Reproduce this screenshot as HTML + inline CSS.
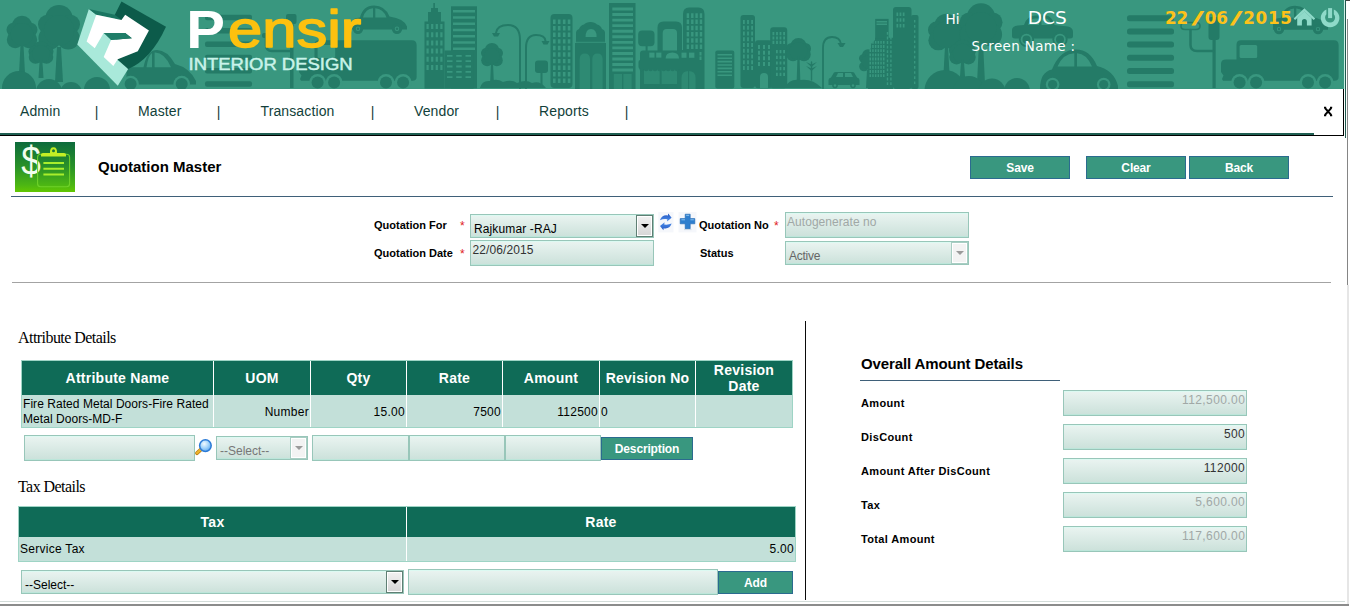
<!DOCTYPE html>
<html lang="en">
<head>
<meta charset="utf-8">
<title>Quotation Master</title>
<style>
html,body{margin:0;padding:0;}
body{width:1350px;height:607px;position:relative;overflow:hidden;background:#fff;font-family:"Liberation Sans",Arial,sans-serif;font-size:12px;color:#000;}
.a{position:absolute;white-space:nowrap;}
#hdr{left:0;top:0;width:1344px;height:89px;background:#39977f;overflow:hidden;}
.vd{font-family:"DejaVu Sans","Liberation Sans",sans-serif;}
.nav{top:103px;font-size:14px;color:#123f3a;line-height:16px;letter-spacing:0.12px;}
.lbl{font-weight:bold;font-size:11px;line-height:13px;color:#000;}
.lbl.r{letter-spacing:0.35px;}
.req{color:#e0201c;font-size:12px;line-height:13px;}
.inp{box-sizing:border-box;border:1px solid #98c6b9;background:linear-gradient(#eaf4f1,#cbe1da);box-shadow:inset 0 1px 0 #dcfaf2,inset 0 -1px 0 #bce6da;font-size:12px;color:#333;overflow:hidden;}
.inp span{position:absolute;white-space:nowrap;}
.inp span.v{letter-spacing:0.4px;right:0.8px;}
.btn{box-sizing:border-box;border:1px solid #2b6b8f;letter-spacing:-0.15px;background:#39977f;color:#fff;font-weight:bold;font-size:12px;text-align:center;}
.th{background:#0f6b57;color:#fff;font-weight:bold;font-size:14px;text-align:center;letter-spacing:0.25px;}
.td{background:#c3e0d9;font-size:12px;color:#000;letter-spacing:0.28px;}
.serif{font-family:"Liberation Serif","Times New Roman",serif;font-size:16px;line-height:18px;color:#000;letter-spacing:-0.55px;}
.dd{box-sizing:border-box;border:1px solid #5f7f74;box-shadow:inset 0 0 0 1px #fff;background:linear-gradient(#f2f2f2,#d6d6d6);}
.dd:after{content:"";position:absolute;left:3.6px;top:8.2px;border-left:4px solid transparent;border-right:4px solid transparent;border-top:4.3px solid #000;}
.dd.dis{border-color:#a9cdc3;background:#f3f3f3;}
.dd.dis:after{border-top-color:#9a9a9a;}
</style>
</head>
<body>

<!-- HEADER -->
<div id="hdr" class="a">
<svg class="a" style="left:0;top:0" width="1344" height="89" viewBox="0 0 1344 89">
<g id="city" fill="#247b67"><!--CITY-->
<circle cx="22" cy="25.9" r="10.23"/>
<circle cx="13.63" cy="29.86" r="7.13"/>
<circle cx="30.37" cy="29.86" r="7.13"/>
<circle cx="15.18" cy="39.76" r="8.37"/>
<circle cx="28.82" cy="39.76" r="8.37"/>
<circle cx="22" cy="34.15" r="11.16"/>
<path d="M20.5 45.0L23.5 45.0L25.0 74L19.0 74z"/>
<circle cx="59" cy="18.8" r="13.86"/>
<circle cx="47.66" cy="24.32" r="9.66"/>
<circle cx="70.34" cy="24.32" r="9.66"/>
<circle cx="49.76" cy="38.12" r="11.34"/>
<circle cx="68.24" cy="38.12" r="11.34"/>
<circle cx="59" cy="30.3" r="15.12"/>
<path d="M57.0 47.0L61.0 47.0L63.0 82L55.0 82z"/>
<circle cx="41" cy="49.4" r="8.25"/>
<circle cx="34.25" cy="51.56" r="5.75"/>
<circle cx="47.75" cy="51.56" r="5.75"/>
<circle cx="35.5" cy="56.96" r="6.75"/>
<circle cx="46.5" cy="56.96" r="6.75"/>
<circle cx="41" cy="53.9" r="9"/>
<path d="M39.8 58.0L42.2 58.0L43.5 78L38.5 78z"/>
<circle cx="19" cy="88" r="17"/>
<circle cx="49" cy="92" r="13"/>
<circle cx="71" cy="93" r="11"/>
<circle cx="97" cy="90" r="13"/>
<path d="M126.5 84.5V71Q126.5 67.2 131 67.2H143.5Q147 50 157 50Q167 50 175 64Q190 68 196 81V84.5z"/>
<path d="M146.5 67.2Q148.5 55 152 53V67.2z M154.6 52.6Q164 52 171 67.2H154.6z" fill="#39977f"/>
<circle cx="130.6" cy="84" r="8.3" fill="#39977f"/>
<circle cx="181.7" cy="84" r="8.3" fill="#39977f"/>
<circle cx="130.6" cy="84" r="6"/>
<circle cx="181.7" cy="84" r="6"/>
<rect x="205" y="14.8" width="47" height="5.5" rx="2"/>
<rect x="205" y="28.1" width="47" height="5.5" rx="2"/>
<rect x="205" y="41.4" width="47" height="5.5" rx="2"/>
<rect x="205" y="54.7" width="47" height="5.5" rx="2"/>
<rect x="205" y="68" width="47" height="5.5" rx="2"/>
<rect x="205" y="81.3" width="47" height="5.5" rx="2"/>
<rect x="290" y="15" width="3.5" height="73"/>
<rect x="286" y="14" width="10.5" height="10" rx="2"/>
<path d="M291 51H272Q266 51 266 45V38" fill="none" stroke="#247b67" stroke-width="2.5" stroke-linecap="round"/>
<rect x="262" y="33" width="9" height="5" rx="2"/>
<path d="M314.5 44.5Q314.5 40.2 319 40.2H412Q416.6 40.2 416.6 45V77Q416.6 80.8 412.6 80.8H301L300 79L301.5 75.5L299 72V64Q299 59.6 304 59.6H314.5z"/>
<rect x="317.6" y="45" width="17.6" height="13" rx="1.5" fill="#39977f"/>
<circle cx="317.6" cy="82.4" r="8.5" fill="#39977f"/>
<circle cx="317.6" cy="82.4" r="6"/>
<circle cx="334.1" cy="82.4" r="8.5" fill="#39977f"/>
<circle cx="334.1" cy="82.4" r="6"/>
<circle cx="386" cy="82.4" r="8.5" fill="#39977f"/>
<circle cx="386" cy="82.4" r="6"/>
<circle cx="403.1" cy="82.4" r="8.5" fill="#39977f"/>
<circle cx="403.1" cy="82.4" r="6"/>
<path d="M352 29.5V23.5Q352 18.5 357 18.0L360 17.5Q363 5.5 374 5.5Q385 5.5 389.5 16.5Q404 18.5 407 26.5V29.5z"/>
<path d="M363 17.5Q365.5 8.5 373 8.3V17.5z M375.3 8.3Q383 8.5 386.5 17.5H375.3z" fill="#39977f"/>
<circle cx="358" cy="28.8" r="5.2"/>
<circle cx="397" cy="28.8" r="5.2"/>
<circle cx="358" cy="28.8" r="2.2" fill="#39977f"/>
<circle cx="397" cy="28.8" r="2.2" fill="#39977f"/>
<circle cx="358" cy="28.8" r="1.3"/>
<circle cx="397" cy="28.8" r="1.3"/>
<rect x="424.5" y="21.5" width="20" height="67"/>
<rect x="428" y="12" width="13" height="10"/>
<rect x="431" y="8" width="7" height="5"/>
<rect x="433.3" y="3" width="1.6" height="6"/>
<path d="M426.5 24.0h2.2v5h-2.2zM431.1 24.0h2.2v5h-2.2zM435.7 24.0h2.2v5h-2.2zM440.3 24.0h2.2v5h-2.2zM426.5 32.2h2.2v5h-2.2zM431.1 32.2h2.2v5h-2.2zM435.7 32.2h2.2v5h-2.2zM440.3 32.2h2.2v5h-2.2zM426.5 40.4h2.2v5h-2.2zM431.1 40.4h2.2v5h-2.2zM435.7 40.4h2.2v5h-2.2zM440.3 40.4h2.2v5h-2.2zM426.5 48.6h2.2v5h-2.2zM431.1 48.6h2.2v5h-2.2zM435.7 48.6h2.2v5h-2.2zM440.3 48.6h2.2v5h-2.2zM426.5 56.8h2.2v5h-2.2zM431.1 56.8h2.2v5h-2.2zM435.7 56.8h2.2v5h-2.2zM440.3 56.8h2.2v5h-2.2zM426.5 65.0h2.2v5h-2.2zM431.1 65.0h2.2v5h-2.2zM435.7 65.0h2.2v5h-2.2zM440.3 65.0h2.2v5h-2.2z" fill="#39977f"/>
<rect x="451" y="6.3" width="26" height="82"/>
<path d="M453.0 10.0h22v2.6h-22zM453.0 16.2h22v2.6h-22zM453.0 22.5h22v2.6h-22zM453.0 28.7h22v2.6h-22zM453.0 34.9h22v2.6h-22zM453.0 41.2h22v2.6h-22zM453.0 47.4h22v2.6h-22z" fill="#39977f"/>
<rect x="444.5" y="50.5" width="29" height="38"/>
<path d="M447.0 55.0h5.5v1.8h-5.5zM456.2 55.0h5.5v1.8h-5.5zM465.5 55.0h5.5v1.8h-5.5zM447.0 60.3h5.5v1.8h-5.5zM456.2 60.3h5.5v1.8h-5.5zM465.5 60.3h5.5v1.8h-5.5zM447.0 65.6h5.5v1.8h-5.5zM456.2 65.6h5.5v1.8h-5.5zM465.5 65.6h5.5v1.8h-5.5zM447.0 70.9h5.5v1.8h-5.5zM456.2 70.9h5.5v1.8h-5.5zM465.5 70.9h5.5v1.8h-5.5zM447.0 76.2h5.5v1.8h-5.5zM456.2 76.2h5.5v1.8h-5.5zM465.5 76.2h5.5v1.8h-5.5z" fill="#39977f"/>
<circle cx="492" cy="50.2" r="7.26"/>
<circle cx="486.06" cy="53.08" r="5.06"/>
<circle cx="497.94" cy="53.08" r="5.06"/>
<circle cx="487.16" cy="60.28" r="5.94"/>
<circle cx="496.84" cy="60.28" r="5.94"/>
<circle cx="492" cy="56.2" r="7.92"/>
<path d="M491.0 63.0L493.0 63.0L494.0 86L490.0 86z"/>
<path d="M480 88Q482 80 490 81Q497 78 503 82Q512 79 517 83Q526 79 532 83Q540 80 546 88z"/>
<path d="M520 88V40Q520 25 508 25Q497 25 496 33" fill="none" stroke="#247b67" stroke-width="2" stroke-linecap="round"/>
<path d="M492 33h8l-2 3.5h-4z"/>
<path d="M526 88V48Q526 35 536 35Q545 35 545.5 41" fill="none" stroke="#247b67" stroke-width="2" stroke-linecap="round"/>
<path d="M541.5 41h8l-2 3.5h-4z"/>
<rect x="535" y="60.5" width="13" height="12.5" rx="3"/>
<rect x="540.5" y="73" width="2" height="15"/>
<rect x="550.5" y="14" width="22" height="74" rx="4"/>
<path d="M553.0 19.5h2.6v4.4h-2.6zM557.9 19.5h2.6v4.4h-2.6zM562.9 19.5h2.6v4.4h-2.6zM567.8 19.5h2.6v4.4h-2.6zM553.0 26.1h2.6v4.4h-2.6zM557.9 26.1h2.6v4.4h-2.6zM562.9 26.1h2.6v4.4h-2.6zM567.8 26.1h2.6v4.4h-2.6zM553.0 32.6h2.6v4.4h-2.6zM557.9 32.6h2.6v4.4h-2.6zM562.9 32.6h2.6v4.4h-2.6zM567.8 32.6h2.6v4.4h-2.6zM553.0 39.2h2.6v4.4h-2.6zM557.9 39.2h2.6v4.4h-2.6zM562.9 39.2h2.6v4.4h-2.6zM567.8 39.2h2.6v4.4h-2.6zM553.0 45.8h2.6v4.4h-2.6zM557.9 45.8h2.6v4.4h-2.6zM562.9 45.8h2.6v4.4h-2.6zM567.8 45.8h2.6v4.4h-2.6zM553.0 52.3h2.6v4.4h-2.6zM557.9 52.3h2.6v4.4h-2.6zM562.9 52.3h2.6v4.4h-2.6zM567.8 52.3h2.6v4.4h-2.6zM553.0 58.9h2.6v4.4h-2.6zM557.9 58.9h2.6v4.4h-2.6zM562.9 58.9h2.6v4.4h-2.6zM567.8 58.9h2.6v4.4h-2.6zM553.0 65.5h2.6v4.4h-2.6zM557.9 65.5h2.6v4.4h-2.6zM562.9 65.5h2.6v4.4h-2.6zM567.8 65.5h2.6v4.4h-2.6zM553.0 72.0h2.6v4.4h-2.6zM557.9 72.0h2.6v4.4h-2.6zM562.9 72.0h2.6v4.4h-2.6zM567.8 72.0h2.6v4.4h-2.6zM553.0 78.6h2.6v4.4h-2.6zM557.9 78.6h2.6v4.4h-2.6zM562.9 78.6h2.6v4.4h-2.6zM567.8 78.6h2.6v4.4h-2.6z" fill="#39977f"/>
<path d="M575 89V43H576V33Q576 30 579 29Q580.5 25 584 24.5Q586 22 590.5 22Q595 22 597 24.5Q600.5 25 602 29Q605 30 605 33V43H606V89z"/>
<path d="M585.6 37Q585.6 29 591 29Q596.6 29 596.6 37z" fill="#39977f"/>
<rect x="575" y="41.8" width="31" height="0.9" fill="#39977f"/>
<path d="M579.7 89V59Q579.7 53.4 584.8 53.4Q590 53.4 590 59V89z M592.3 89V59Q592.3 53.4 597.4 53.4Q602.6 53.4 602.6 59V89z" fill="#2e8a73"/>
<rect x="609" y="3" width="26.5" height="86"/>
<path d="M612.3 7.6h20.7v2.9h-20.7zM612.3 13.1h20.7v2.9h-20.7zM612.3 18.7h20.7v2.9h-20.7zM612.3 24.2h20.7v2.9h-20.7zM612.3 29.8h20.7v2.9h-20.7zM612.3 35.3h20.7v2.9h-20.7zM612.3 40.9h20.7v2.9h-20.7zM612.3 46.4h20.7v2.9h-20.7zM612.3 52.0h20.7v2.9h-20.7zM612.3 57.5h20.7v2.9h-20.7zM612.3 63.1h20.7v2.9h-20.7zM612.3 68.6h20.7v2.9h-20.7z" fill="#39977f"/>
<rect x="613.8" y="74" width="8.2" height="15" fill="#2e8a73"/>
<rect x="623.4" y="74" width="8.2" height="15" fill="#2e8a73"/>
<rect x="638.2" y="30.4" width="16.3" height="15.8" rx="4"/>
<rect x="645.6" y="46" width="2" height="16"/>
<path d="M657.5 52V27.5Q657.5 21.5 663.5 21.5H676Q682 21.5 682 27.5V52H677V33Q677 29 673 29H666.7Q662.7 29 662.7 33V52z"/>
<path d="M640 89V53.5Q640 50.4 643 50.4H683V89z"/>
<rect x="649.3" y="52.6" width="5.2" height="5" fill="#39977f"/>
<rect x="656.2" y="52.6" width="5.2" height="5" fill="#39977f"/>
<path d="M665.6 58.4Q665.6 52.4 672.3 52.4Q679 52.4 679 58.4z" fill="#39977f"/>
<rect x="644" y="69" width="15.7" height="15" fill="#2e8a73"/>
<rect x="661.6" y="69" width="15.4" height="15" fill="#2e8a73"/>
<circle cx="641.8" cy="69" r="2.3"/>
<circle cx="646.2" cy="69" r="2.3"/>
<circle cx="650.6" cy="69" r="2.3"/>
<circle cx="655" cy="69" r="2.3"/>
<circle cx="659.4" cy="69" r="2.3"/>
<circle cx="663.8" cy="69" r="2.3"/>
<circle cx="668.2" cy="69" r="2.3"/>
<circle cx="672.6" cy="69" r="2.3"/>
<circle cx="677" cy="69" r="2.3"/>
<circle cx="681.4" cy="69" r="2.3"/>
<rect x="638.5" y="60" width="44.5" height="9" rx="2"/>
<circle cx="652" cy="90" r="5.5"/>
<circle cx="662" cy="90.5" r="5"/>
<circle cx="672" cy="90" r="5.5"/>
<path d="M683 89V14Q683 7.4 689 7.4H698.5Q704.5 7.4 704.5 14V89z"/>
<rect x="680" y="50" width="6" height="39"/>
<path d="M686.7 13.3h2.4v4.6h-2.4zM691.1 13.3h2.4v4.6h-2.4zM695.4 13.3h2.4v4.6h-2.4zM699.8 13.3h2.4v4.6h-2.4zM686.7 19.5h2.4v4.6h-2.4zM691.1 19.5h2.4v4.6h-2.4zM695.4 19.5h2.4v4.6h-2.4zM699.8 19.5h2.4v4.6h-2.4zM686.7 25.7h2.4v4.6h-2.4zM691.1 25.7h2.4v4.6h-2.4zM695.4 25.7h2.4v4.6h-2.4zM699.8 25.7h2.4v4.6h-2.4zM686.7 32.0h2.4v4.6h-2.4zM691.1 32.0h2.4v4.6h-2.4zM695.4 32.0h2.4v4.6h-2.4zM699.8 32.0h2.4v4.6h-2.4zM686.7 38.2h2.4v4.6h-2.4zM691.1 38.2h2.4v4.6h-2.4zM695.4 38.2h2.4v4.6h-2.4zM699.8 38.2h2.4v4.6h-2.4zM686.7 44.4h2.4v4.6h-2.4zM691.1 44.4h2.4v4.6h-2.4zM695.4 44.4h2.4v4.6h-2.4zM699.8 44.4h2.4v4.6h-2.4z" fill="#39977f"/>
<rect x="681.5" y="52.6" width="5" height="5.2" fill="#39977f"/>
<rect x="689" y="52.6" width="5.4" height="5.2" fill="#39977f"/>
<path d="M699.5 52.0h2v3.4h-2zM699.5 56.6h2v3.4h-2z" fill="#39977f"/>
<path d="M681.5 89V78Q681.5 71 688.5 71Q695.6 71 695.6 78V89z" fill="#2e8a73"/>
<rect x="688" y="71" width="1.1" height="18"/>
<rect x="715.3" y="50.4" width="19" height="38" rx="2"/>
<path d="M717.5 54.0h14.5v1.6h-14.5zM717.5 57.4h14.5v1.6h-14.5zM717.5 60.8h14.5v1.6h-14.5zM717.5 64.2h14.5v1.6h-14.5zM717.5 67.6h14.5v1.6h-14.5zM717.5 71.0h14.5v1.6h-14.5zM717.5 74.4h14.5v1.6h-14.5z" fill="#39977f"/>
<rect x="740.5" y="15" width="14.5" height="73" rx="3"/>
<path d="M743.0 20.0h1.8v4h-1.8zM747.1 20.0h1.8v4h-1.8zM751.2 20.0h1.8v4h-1.8zM743.0 25.8h1.8v4h-1.8zM747.1 25.8h1.8v4h-1.8zM751.2 25.8h1.8v4h-1.8zM743.0 31.5h1.8v4h-1.8zM747.1 31.5h1.8v4h-1.8zM751.2 31.5h1.8v4h-1.8zM743.0 37.2h1.8v4h-1.8zM747.1 37.2h1.8v4h-1.8zM751.2 37.2h1.8v4h-1.8zM743.0 43.0h1.8v4h-1.8zM747.1 43.0h1.8v4h-1.8zM751.2 43.0h1.8v4h-1.8zM743.0 48.8h1.8v4h-1.8zM747.1 48.8h1.8v4h-1.8zM751.2 48.8h1.8v4h-1.8zM743.0 54.5h1.8v4h-1.8zM747.1 54.5h1.8v4h-1.8zM751.2 54.5h1.8v4h-1.8zM743.0 60.2h1.8v4h-1.8zM747.1 60.2h1.8v4h-1.8zM751.2 60.2h1.8v4h-1.8zM743.0 66.0h1.8v4h-1.8zM747.1 66.0h1.8v4h-1.8zM751.2 66.0h1.8v4h-1.8z" fill="#39977f"/>
<rect x="755" y="40.3" width="17" height="48" rx="3"/>
<path d="M758.0 45.0h2v4h-2zM763.0 45.0h2v4h-2zM768.0 45.0h2v4h-2zM758.0 50.7h2v4h-2zM763.0 50.7h2v4h-2zM768.0 50.7h2v4h-2zM758.0 56.3h2v4h-2zM763.0 56.3h2v4h-2zM768.0 56.3h2v4h-2zM758.0 62.0h2v4h-2zM763.0 62.0h2v4h-2zM768.0 62.0h2v4h-2z" fill="#39977f"/>
<path d="M760 88V77Q760 73 764 73Q768 73 768 77V88z" fill="#39977f"/>
<rect x="770.2" y="27.2" width="17" height="61" rx="3"/>
<path d="M772.5 32.0h1.8v3.2h-1.8zM776.1 32.0h1.8v3.2h-1.8zM779.6 32.0h1.8v3.2h-1.8zM783.2 32.0h1.8v3.2h-1.8zM772.5 36.4h1.8v3.2h-1.8zM776.1 36.4h1.8v3.2h-1.8zM779.6 36.4h1.8v3.2h-1.8zM783.2 36.4h1.8v3.2h-1.8zM772.5 40.8h1.8v3.2h-1.8zM776.1 40.8h1.8v3.2h-1.8zM779.6 40.8h1.8v3.2h-1.8zM783.2 40.8h1.8v3.2h-1.8z" fill="#39977f"/>
<path d="M776.0 50.0h1.8v3.2h-1.8zM779.6 50.0h1.8v3.2h-1.8zM783.2 50.0h1.8v3.2h-1.8zM776.0 55.7h1.8v3.2h-1.8zM779.6 55.7h1.8v3.2h-1.8zM783.2 55.7h1.8v3.2h-1.8zM776.0 61.4h1.8v3.2h-1.8zM779.6 61.4h1.8v3.2h-1.8zM783.2 61.4h1.8v3.2h-1.8zM776.0 67.1h1.8v3.2h-1.8zM779.6 67.1h1.8v3.2h-1.8zM783.2 67.1h1.8v3.2h-1.8zM776.0 72.8h1.8v3.2h-1.8zM779.6 72.8h1.8v3.2h-1.8zM783.2 72.8h1.8v3.2h-1.8z" fill="#39977f"/>
<circle cx="798.5" cy="46.35" r="8.25"/>
<circle cx="791.75" cy="48.69" r="5.75"/>
<circle cx="805.25" cy="48.69" r="5.75"/>
<circle cx="793" cy="54.54" r="6.75"/>
<circle cx="804" cy="54.54" r="6.75"/>
<circle cx="798.5" cy="51.225" r="9"/>
<path d="M797.5 56.0L799.5 56.0L800.5 86L796.5 86z"/>
<path d="M784 88Q790 78 800 80Q812 78 822 88z"/>
<path d="M811.5 80V62" fill="none" stroke="#247b67" stroke-width="1.4" stroke-linecap="round"/>
<path d="M806 62l5.5 5 5.5-5-5.5 2.5z M806 66l5.5 5 5.5-5-5.5 2.5z"/>
<path d="M823 88V48Q823 37 832 37Q840 37 841 44" fill="none" stroke="#247b67" stroke-width="1.8" stroke-linecap="round"/>
<path d="M837.5 43h8l-2.5 4h-3z"/>
<path d="M828.5 85V80Q828.5 78 831 77.5L834 72.5Q834.5 72 836 72H852Q853.5 72 854 72.5L857 77.5Q859.5 78 859.5 80V85z"/>
<path d="M836 77l2-4h5v4z M845 77v-4h6l2 4z" fill="#39977f"/>
<circle cx="835" cy="85.5" r="2.8"/>
<circle cx="853" cy="85.5" r="2.8"/>
<circle cx="835" cy="85.5" r="1.2" fill="#39977f"/>
<circle cx="853" cy="85.5" r="1.2" fill="#39977f"/>
<circle cx="868" cy="55.1" r="5.94"/>
<circle cx="863.14" cy="58.34" r="4.14"/>
<circle cx="872.86" cy="58.34" r="4.14"/>
<circle cx="864.04" cy="66.44" r="4.86"/>
<circle cx="871.96" cy="66.44" r="4.86"/>
<circle cx="868" cy="61.85" r="6.48"/>
<path d="M867.0 70.0L869.0 70.0L870.0 88L866.0 88z"/>
<path d="M868 89V52L871 48V44L875 40V37.8H893V89z"/>
<rect x="875.2" y="18.9" width="13.4" height="20"/>
<rect x="893" y="7" width="18.5" height="82" rx="3"/>
<rect x="911" y="15" width="7.5" height="74" rx="2"/>
<path d="M876.5 21.0h10.5v0.9h-10.5zM876.5 22.6h10.5v0.9h-10.5zM876.5 24.1h10.5v0.9h-10.5z" fill="#39977f"/>
<path d="M869.5 41.0h1.5v2.8h-1.5zM872.2 41.0h1.5v2.8h-1.5zM874.9 41.0h1.5v2.8h-1.5zM877.6 41.0h1.5v2.8h-1.5zM880.3 41.0h1.5v2.8h-1.5zM883.0 41.0h1.5v2.8h-1.5zM869.5 45.1h1.5v2.8h-1.5zM872.2 45.1h1.5v2.8h-1.5zM874.9 45.1h1.5v2.8h-1.5zM877.6 45.1h1.5v2.8h-1.5zM880.3 45.1h1.5v2.8h-1.5zM883.0 45.1h1.5v2.8h-1.5zM869.5 49.3h1.5v2.8h-1.5zM872.2 49.3h1.5v2.8h-1.5zM874.9 49.3h1.5v2.8h-1.5zM877.6 49.3h1.5v2.8h-1.5zM880.3 49.3h1.5v2.8h-1.5zM883.0 49.3h1.5v2.8h-1.5zM869.5 53.5h1.5v2.8h-1.5zM872.2 53.5h1.5v2.8h-1.5zM874.9 53.5h1.5v2.8h-1.5zM877.6 53.5h1.5v2.8h-1.5zM880.3 53.5h1.5v2.8h-1.5zM883.0 53.5h1.5v2.8h-1.5zM869.5 57.6h1.5v2.8h-1.5zM872.2 57.6h1.5v2.8h-1.5zM874.9 57.6h1.5v2.8h-1.5zM877.6 57.6h1.5v2.8h-1.5zM880.3 57.6h1.5v2.8h-1.5zM883.0 57.6h1.5v2.8h-1.5zM869.5 61.8h1.5v2.8h-1.5zM872.2 61.8h1.5v2.8h-1.5zM874.9 61.8h1.5v2.8h-1.5zM877.6 61.8h1.5v2.8h-1.5zM880.3 61.8h1.5v2.8h-1.5zM883.0 61.8h1.5v2.8h-1.5zM869.5 65.9h1.5v2.8h-1.5zM872.2 65.9h1.5v2.8h-1.5zM874.9 65.9h1.5v2.8h-1.5zM877.6 65.9h1.5v2.8h-1.5zM880.3 65.9h1.5v2.8h-1.5zM883.0 65.9h1.5v2.8h-1.5zM869.5 70.1h1.5v2.8h-1.5zM872.2 70.1h1.5v2.8h-1.5zM874.9 70.1h1.5v2.8h-1.5zM877.6 70.1h1.5v2.8h-1.5zM880.3 70.1h1.5v2.8h-1.5zM883.0 70.1h1.5v2.8h-1.5zM869.5 74.2h1.5v2.8h-1.5zM872.2 74.2h1.5v2.8h-1.5zM874.9 74.2h1.5v2.8h-1.5zM877.6 74.2h1.5v2.8h-1.5zM880.3 74.2h1.5v2.8h-1.5zM883.0 74.2h1.5v2.8h-1.5z" fill="#39977f"/>
<path d="M886.8 32.0h1.4v2.8h-1.4zM890.2 32.0h1.4v2.8h-1.4zM886.8 36.6h1.4v2.8h-1.4zM890.2 36.6h1.4v2.8h-1.4zM886.8 41.1h1.4v2.8h-1.4zM890.2 41.1h1.4v2.8h-1.4zM886.8 45.7h1.4v2.8h-1.4zM890.2 45.7h1.4v2.8h-1.4zM886.8 50.3h1.4v2.8h-1.4zM890.2 50.3h1.4v2.8h-1.4zM886.8 54.8h1.4v2.8h-1.4zM890.2 54.8h1.4v2.8h-1.4zM886.8 59.4h1.4v2.8h-1.4zM890.2 59.4h1.4v2.8h-1.4zM886.8 63.9h1.4v2.8h-1.4zM890.2 63.9h1.4v2.8h-1.4zM886.8 68.5h1.4v2.8h-1.4zM890.2 68.5h1.4v2.8h-1.4zM886.8 73.1h1.4v2.8h-1.4zM890.2 73.1h1.4v2.8h-1.4zM886.8 77.6h1.4v2.8h-1.4zM890.2 77.6h1.4v2.8h-1.4zM886.8 82.2h1.4v2.8h-1.4zM890.2 82.2h1.4v2.8h-1.4z" fill="#39977f"/>
<path d="M896.5 12.5h1.7v3.4h-1.7zM899.6 12.5h1.7v3.4h-1.7zM902.8 12.5h1.7v3.4h-1.7zM896.5 18.3h1.7v3.4h-1.7zM899.6 18.3h1.7v3.4h-1.7zM902.8 18.3h1.7v3.4h-1.7zM896.5 24.1h1.7v3.4h-1.7zM899.6 24.1h1.7v3.4h-1.7zM902.8 24.1h1.7v3.4h-1.7z" fill="#39977f"/>
<path d="M914.0 20.0h1.4v2.6h-1.4zM914.0 25.1h1.4v2.6h-1.4zM914.0 30.2h1.4v2.6h-1.4zM914.0 35.4h1.4v2.6h-1.4zM914.0 40.5h1.4v2.6h-1.4zM914.0 45.6h1.4v2.6h-1.4zM914.0 50.7h1.4v2.6h-1.4zM914.0 55.8h1.4v2.6h-1.4zM914.0 60.9h1.4v2.6h-1.4zM914.0 66.1h1.4v2.6h-1.4zM914.0 71.2h1.4v2.6h-1.4zM914.0 76.3h1.4v2.6h-1.4zM914.0 81.4h1.4v2.6h-1.4z" fill="#39977f"/>
<circle cx="946.5" cy="25.92" r="12.21"/>
<circle cx="936.51" cy="30.048" r="8.51"/>
<circle cx="956.49" cy="30.048" r="8.51"/>
<circle cx="938.36" cy="40.368" r="9.99"/>
<circle cx="954.64" cy="40.368" r="9.99"/>
<circle cx="946.5" cy="34.52" r="13.32"/>
<path d="M945.0 46.0L948.0 46.0L949.5 74L943.5 74z"/>
<circle cx="981" cy="17.44" r="14.19"/>
<circle cx="969.39" cy="22.336" r="9.89"/>
<circle cx="992.61" cy="22.336" r="9.89"/>
<circle cx="971.54" cy="34.576" r="11.61"/>
<circle cx="990.46" cy="34.576" r="11.61"/>
<circle cx="981" cy="27.64" r="15.48"/>
<path d="M979.0 42.0L983.0 42.0L985.0 84L977.0 84z"/>
<circle cx="962.5" cy="48.3" r="8.91"/>
<circle cx="955.21" cy="50.82" r="6.21"/>
<circle cx="969.79" cy="50.82" r="6.21"/>
<circle cx="956.56" cy="57.12" r="7.29"/>
<circle cx="968.44" cy="57.12" r="7.29"/>
<circle cx="962.5" cy="53.55" r="9.72"/>
<path d="M961.2 59.0L963.8 59.0L965.1 78L959.9 78z"/>
<circle cx="945" cy="90.5" r="20.5"/>
<circle cx="969" cy="92" r="16"/>
<circle cx="992" cy="92" r="13.5"/>
<circle cx="1017" cy="91" r="13"/>
<path d="M1012 36V30Q1012 26 1018 25.5L1024 25Q1027 15.5 1036 15.5H1046Q1052 16 1054.5 25L1068 26.5Q1073 27.5 1073 32V36Q1073 38.5 1070 38.5H1015Q1012 38.5 1012 36z"/>
<path d="M1028 25Q1029.5 19 1035 18.5H1039V25z M1041.5 18.5H1045.5Q1050 19 1051.5 25H1041.5z" fill="#39977f"/>
<circle cx="1026.5" cy="39.5" r="7.6"/>
<circle cx="1060" cy="39.5" r="7.6"/>
<circle cx="1026.5" cy="39.5" r="5.8" fill="#39977f"/>
<circle cx="1060" cy="39.5" r="5.8" fill="#39977f"/>
<circle cx="1026.5" cy="39.5" r="4"/>
<circle cx="1060" cy="39.5" r="4"/>
<path d="M1040 89Q1040 72 1052 69.5Q1060 49.6 1076 49.6Q1090 49.6 1097 66Q1114 70 1118 86V89z"/>
<path d="M1057.5 66.5Q1063 53.5 1074.3 53.2V66.5z M1077 53.2Q1086.5 53.5 1092 66.5H1077z" fill="#39977f"/>
<circle cx="1052.6" cy="84.5" r="6.8" fill="#39977f"/>
<circle cx="1103.7" cy="84.5" r="6.8" fill="#39977f"/>
<circle cx="1052.6" cy="84.5" r="4.6"/>
<circle cx="1103.7" cy="84.5" r="4.6"/>
<rect x="1127" y="15.2" width="47" height="6" rx="2.5"/>
<rect x="1127" y="28.4" width="47" height="6" rx="2.5"/>
<rect x="1127" y="41.6" width="47" height="6" rx="2.5"/>
<rect x="1127" y="54.8" width="47" height="6" rx="2.5"/>
<rect x="1127" y="68" width="47" height="6" rx="2.5"/>
<rect x="1127" y="81.2" width="47" height="6" rx="2.5"/>
<rect x="1212.5" y="20" width="3.2" height="68"/>
<rect x="1208.5" y="17" width="11" height="23" rx="3"/>
<path d="M1213 51H1197Q1190.5 51 1190.5 45V30" fill="none" stroke="#247b67" stroke-width="2.5" stroke-linecap="round"/>
<path d="M1181 26Q1181 22.5 1185 22.5H1196Q1200 22.5 1200 26Q1200 29.5 1196 29.5H1185Q1181 29.5 1181 26z" fill="none" stroke="#247b67" stroke-width="1.6" stroke-linecap="round"/>
<path d="M1273 29.8V23.8Q1273 18.8 1278 18.3L1281 17.8Q1284 5.8 1295 5.8Q1306 5.8 1310.5 16.8Q1325 18.8 1328 26.8V29.8z"/>
<path d="M1284 17.8Q1286.5 8.8 1294 8.6V17.8z M1296.3 8.6Q1304 8.8 1307.5 17.8H1296.3z" fill="#39977f"/>
<circle cx="1279" cy="29.1" r="5.2"/>
<circle cx="1318" cy="29.1" r="5.2"/>
<circle cx="1279" cy="29.1" r="2.2" fill="#39977f"/>
<circle cx="1318" cy="29.1" r="2.2" fill="#39977f"/>
<circle cx="1279" cy="29.1" r="1.3"/>
<circle cx="1318" cy="29.1" r="1.3"/>
<path d="M1236.5 44.5Q1236.5 40.2 1241 40.2H1334Q1338.6 40.2 1338.6 45V77Q1338.6 80.8 1334.6 80.8H1223L1222 79L1223.5 75.5L1221 72V64Q1221 59.6 1226 59.6H1236.5z"/>
<rect x="1239.6" y="45" width="17.6" height="13" rx="1.5" fill="#39977f"/>
<circle cx="1239.6" cy="82.4" r="8.5" fill="#39977f"/>
<circle cx="1239.6" cy="82.4" r="6"/>
<circle cx="1256.1" cy="82.4" r="8.5" fill="#39977f"/>
<circle cx="1256.1" cy="82.4" r="6"/>
<circle cx="1308" cy="82.4" r="8.5" fill="#39977f"/>
<circle cx="1308" cy="82.4" r="6"/>
<circle cx="1325.1" cy="82.4" r="8.5" fill="#39977f"/>
<circle cx="1325.1" cy="82.4" r="6"/>
<!--/CITY--></g>
<!--LOGO-->
<g transform="translate(74,0) scale(0.14837)">
<polygon points="100,60 22,300 295,578 365,465 150,100" fill="#a9e9da"/>
<path d="M275 100L320 10L620 180Q520 400 365 465L290 400z" fill="#0c5b4a"/>
<polygon points="100,60 275,100 320,135 150,100" fill="#1a7561"/>
<polygon points="150,100 320,135 345,100 505,205 430,345 295,400 265,445 200,385 250,270 390,258 345,222 200,222 140,325 85,280" fill="#fff"/>
<polygon points="200,222 345,222 390,258 250,270" fill="#1f7d68"/>
</g>
<text x="186.3" y="48.2" font-family="Liberation Sans, Arial, sans-serif" font-weight="bold" font-size="53" fill="#fff" textLength="38.7" lengthAdjust="spacingAndGlyphs">P</text>
<text x="227.9" y="47.4" font-family="Liberation Sans, Arial, sans-serif" font-size="52" fill="#fdc10f" stroke="#fdc10f" stroke-width="1.5" stroke-linejoin="round" textLength="133.5" lengthAdjust="spacingAndGlyphs">ensir</text>
<text x="188.6" y="69.7" font-family="Liberation Sans, Arial, sans-serif" font-size="15.8" fill="#c9f3e9" stroke="#c9f3e9" stroke-width="0.45" textLength="164" lengthAdjust="spacingAndGlyphs">INTERIOR DESIGN</text>
<text x="945.5" y="23.8" font-family="DejaVu Sans, sans-serif" font-size="13.6" fill="#fff">Hi</text>
<text x="1027.8" y="23.8" font-family="DejaVu Sans, sans-serif" font-size="17" fill="#fff" textLength="39" lengthAdjust="spacingAndGlyphs">DCS</text>
<text x="971.6" y="50.8" font-family="DejaVu Sans, sans-serif" font-size="13.4" fill="#fff" textLength="103.5">Screen Name :</text>
<g font-family="DejaVu Sans, sans-serif" font-weight="bold" font-size="16.8" fill="#fdc21a"><text x="1164.9" y="23.7">22</text><text transform="translate(1191.2,23.7) scale(2.1,1)">/</text><text x="1204.7" y="23.7">06</text><text transform="translate(1229.8,23.7) scale(2.1,1)">/</text><text x="1243.2" y="23.7" textLength="48.8">2015</text></g>
<g fill="#8fdac9">
<path d="M1293.6 18.4L1304.4 8.2L1315.2 18.4L1313.7 20L1304.4 11.4L1295.1 20z"/><path d="M1297.2 18L1304.4 11.3L1311.6 18V25.4H1306.9V21.6Q1306.9 19 1304.4 19Q1301.9 19 1301.9 21.6V25.4H1297.2z"/>
<path d="M1328.1 8.1h4v10h-4z"/>
<path d="M1326.4 9.4V14.2A5 5 0 1 0 1333.8 14.2V9.4A9.3 9.3 0 1 1 1326.4 9.4z"/>
</g>

<!--/LOGO-->
</svg>
</div>

<!-- frame lines right of header / nav -->
<div class="a" style="left:1344px;top:0;width:1px;height:89px;background:#cdeee5"></div>
<div class="a" style="left:1343px;top:89px;width:1px;height:47px;background:#000"></div>
<div class="a" style="left:1345px;top:0;width:1px;height:138px;background:#1f5a4e"></div>
<div class="a" style="left:1347px;top:285px;width:2px;height:319px;background:#e6e6e6"></div>
<div class="a" style="left:1347px;top:19px;width:1px;height:266px;background:#858585"></div>
<div class="a" style="left:1346px;top:0;width:4px;height:1px;background:#444"></div>

<!-- NAV -->
<div class="a nav" style="left:20px">Admin</div>
<div class="a nav" style="left:94.8px;top:104px">|</div>
<div class="a nav" style="left:138px">Master</div>
<div class="a nav" style="left:216.8px;top:104px">|</div>
<div class="a nav" style="left:260.5px">Transaction</div>
<div class="a nav" style="left:370.8px;top:104px">|</div>
<div class="a nav" style="left:414px">Vendor</div>
<div class="a nav" style="left:495.8px;top:104px">|</div>
<div class="a nav" style="left:539px">Reports</div>
<div class="a nav" style="left:624.8px;top:104px">|</div>
<svg class="a" style="left:1323px;top:106px" width="11" height="11" viewBox="0 0 11 11"><path d="M1.8 1.9L8.4 9.1M8.4 1.9L1.8 9.1" stroke="#000" stroke-width="2.1" fill="none"/><path d="M1 1.3h2.2M7 1.3h2.2M1 9.7h2.2M7 9.7h2.2" stroke="#000" stroke-width="1.2"/></svg>
<div class="a" style="left:0;top:133px;width:1314px;height:2px;background:#1f5f52"></div>
<div class="a" style="left:0;top:135px;width:1344px;height:1px;background:#000"></div>

<!-- TITLE ROW -->
<svg class="a" style="left:15px;top:142px" width="60" height="50" viewBox="0 0 60 50">
<defs><linearGradient id="gg" x1="0" y1="0" x2="0" y2="1"><stop offset="0" stop-color="#0d6b3c"/><stop offset="0.5" stop-color="#2a9228"/><stop offset="0.85" stop-color="#4bb514"/><stop offset="1" stop-color="#62c702"/></linearGradient></defs>
<rect width="60" height="50" fill="url(#gg)"/>
<text x="6.2" y="32.9" font-family="Liberation Sans, Arial, sans-serif" font-size="40" fill="#f2fdee" textLength="19.5" lengthAdjust="spacingAndGlyphs">$</text>
<rect x="22.6" y="12.2" width="32" height="32.6" rx="3" fill="none" stroke="#6fd22a" stroke-width="1.1"/>
<path d="M26 14.6V12.6Q26 11 28 11H35Q34.6 5.2 38.5 5.2Q42.4 5.2 42 11H49Q51 11 51 12.6V14.6z" fill="#c3ee25"/>
<circle cx="38.5" cy="8.7" r="1.5" fill="#19793a"/>
<path d="M28.4 21h20.6M28.4 26.8h20.6M28.4 32.4h20.6" stroke="#a9ee2c" stroke-width="2" fill="none"/>
</svg>
<div class="a" style="left:98px;top:158px;font-size:15px;font-weight:bold;line-height:18px">Quotation Master</div>
<div class="a btn" style="left:970px;top:156px;width:100px;height:23px;line-height:22.5px">Save</div>
<div class="a btn" style="left:1086px;top:156px;width:100px;height:23px;line-height:22.5px">Clear</div>
<div class="a btn" style="left:1189px;top:156px;width:100px;height:23px;line-height:22.5px">Back</div>
<div class="a" style="left:11px;top:196px;width:1322px;height:1px;background:#3f6079"></div>

<!-- FORM TOP -->
<div class="a lbl" style="left:374px;top:219px">Quotation For</div>
<div class="a req" style="left:460px;top:220px">*</div>
<div class="a inp" style="left:470px;top:214px;width:184px;height:24px"><span style="left:3px;top:7px;font-size:12px;color:#000;letter-spacing:0.12px">Rajkumar -RAJ</span></div>
<div class="a dd" style="left:636px;top:215px;width:17px;height:22px"></div>
<div class="a lbl" style="left:374px;top:247px">Quotation Date</div>
<div class="a req" style="left:460px;top:248px">*</div>
<div class="a inp" style="left:470px;top:240px;width:184px;height:26px"><span style="left:1.5px;top:2px;letter-spacing:0.1px">22/06/2015</span></div>

<!-- icons: refresh, plus -->
<svg class="a" style="left:658px;top:212px" width="40" height="21" viewBox="0 0 40 21">
<rect x="0.3" y="0" width="15.2" height="20.4" fill="#f5f7fb"/>
<rect x="20.5" y="0" width="18" height="20.4" fill="#f5f7fb"/>
<defs><linearGradient id="gb" x1="0" y1="0" x2="0" y2="1"><stop offset="0" stop-color="#2458c4"/><stop offset="1" stop-color="#4d8fea"/></linearGradient></defs>
<g id="arw"><path d="M1.9 8.2Q4.2 2.4 9.9 3.5L10.2 1.6L13.6 5.8L9 9.6L9.4 7.2Q5.4 6.6 1.9 8.2z" fill="url(#gb)"/></g>
<use href="#arw" transform="rotate(180 7.8 9.9)"/>
<path d="M27.2 2.2h5v4.4h4.6v5.2h-4.6v4.9h-5v-4.9h-5v-5.2h5z" fill="#2f7fce" stroke="#1f66b4" stroke-width="0.6"/>
<path d="M28.2 3.4h3M23.4 7.8h3.6M32.4 7.8h3.4" stroke="#8fc6f2" stroke-width="0.9" fill="none"/>
<path d="M26 17.6h7.5" stroke="#c9d3dd" stroke-width="0.8"/>
</svg>
<div class="a lbl" style="left:699px;top:219px">Quotation No</div>
<div class="a req" style="left:774px;top:220px">*</div>
<div class="a inp" style="left:785px;top:212px;width:184px;height:26px"><span style="left:1px;top:2px;color:#a0a8a6;letter-spacing:0.05px">Autogenerate no</span></div>
<div class="a lbl" style="left:700px;top:247px">Status</div>
<div class="a inp" style="left:785px;top:241px;width:184px;height:24px"><span style="left:3px;top:7px;color:#666;letter-spacing:-0.25px">Active</span></div>
<div class="a dd dis" style="left:951px;top:242px;width:17px;height:22px"></div>
<div class="a" style="left:12px;top:282px;width:1319px;height:1px;background:#a3a3a3"></div>

<!-- ATTRIBUTE DETAILS -->
<div class="a serif" style="left:18px;top:329px">Attribute Details</div>
<div class="a" style="left:21px;top:360px;width:772px;height:68px;background:#fff;border:1px solid #9ed4c5;box-sizing:border-box"></div>
<div class="a th" style="left:22px;top:361px;width:191px;height:34px;line-height:35px">Attribute Name</div>
<div class="a th" style="left:214px;top:361px;width:96px;height:34px;line-height:35px">UOM</div>
<div class="a th" style="left:311px;top:361px;width:95px;height:34px;line-height:35px">Qty</div>
<div class="a th" style="left:407px;top:361px;width:95px;height:34px;line-height:35px">Rate</div>
<div class="a th" style="left:503px;top:361px;width:96px;height:34px;line-height:35px">Amount</div>
<div class="a th" style="left:600px;top:361px;width:95px;height:34px;line-height:35px">Revision No</div>
<div class="a th" style="left:696px;top:361px;width:96px;height:34px;line-height:15.5px;white-space:normal"><div style="padding-top:2px">Revision<br>Date</div></div>
<div class="a td" style="left:22px;top:395px;width:191px;height:32px;line-height:15px;white-space:normal"><div style="padding:1.6px 0 0 1px;white-space:nowrap;letter-spacing:0.05px;line-height:15.4px">Fire Rated Metal Doors-Fire Rated<br>Metal Doors-MD-F</div></div>
<div class="a td" style="left:214px;top:395px;width:96px;height:32px;line-height:34px;text-align:right"><span style="padding-right:1px">Number</span></div>
<div class="a td" style="left:311px;top:395px;width:95px;height:32px;line-height:34px;text-align:right"><span style="padding-right:1px">15.00</span></div>
<div class="a td" style="left:407px;top:395px;width:95px;height:32px;line-height:34px;text-align:right"><span style="padding-right:1px">7500</span></div>
<div class="a td" style="left:503px;top:395px;width:96px;height:32px;line-height:34px;text-align:right"><span style="padding-right:1px">112500</span></div>
<div class="a td" style="left:600px;top:395px;width:95px;height:32px;line-height:34px"><span style="padding-left:1px">0</span></div>
<div class="a td" style="left:696px;top:395px;width:96px;height:32px"></div>

<div class="a inp" style="left:24px;top:435px;width:171px;height:26px"></div>
<svg class="a" style="left:194px;top:437px" width="20" height="20" viewBox="0 0 20 20">
<defs><radialGradient id="lens" cx="0.4" cy="0.35" r="0.7"><stop offset="0" stop-color="#f2fbff"/><stop offset="0.55" stop-color="#9fd2fb"/><stop offset="1" stop-color="#5aa6ee"/></radialGradient></defs>
<path d="M6.8 12.6L3 16.2" stroke="#b9811a" stroke-width="3.8" stroke-linecap="round"/>
<path d="M6.7 12.5L3.1 16" stroke="#efb52c" stroke-width="2.4" stroke-linecap="round"/>
<circle cx="11.4" cy="8.6" r="5.8" fill="url(#lens)" stroke="#2b7ad6" stroke-width="1.5"/>
</svg>
<div class="a inp" style="left:216px;top:436px;width:92px;height:24px"><span style="left:3px;top:7px;color:#777">--Select--</span></div>
<div class="a dd dis" style="left:290px;top:437px;width:17px;height:22px"></div>
<div class="a inp" style="left:312px;top:435px;width:97px;height:26px"></div>
<div class="a inp" style="left:409px;top:435px;width:96px;height:26px"></div>
<div class="a inp" style="left:505px;top:435px;width:96px;height:26px"></div>
<div class="a btn" style="left:601px;top:437px;width:92px;height:23px;line-height:22px">Description</div>

<!-- TAX DETAILS -->
<div class="a serif" style="left:18px;top:478px">Tax Details</div>
<div class="a" style="left:18px;top:506px;width:778px;height:56px;background:#fff;border:1px solid #9ed4c5;box-sizing:border-box"></div>
<div class="a th" style="left:19px;top:507px;width:387px;height:30px;line-height:31px">Tax</div>
<div class="a th" style="left:407px;top:507px;width:388px;height:30px;line-height:31px">Rate</div>
<div class="a td" style="left:19px;top:537px;width:387px;height:24px;line-height:24px"><span style="padding-left:1px">Service Tax</span></div>
<div class="a td" style="left:407px;top:537px;width:388px;height:24px;line-height:24px;text-align:right"><span style="padding-right:1px">5.00</span></div>
<div class="a inp" style="left:21px;top:570px;width:383px;height:24px"><span style="left:3px;top:7px;color:#000">--Select--</span></div>
<div class="a dd" style="left:386px;top:571px;width:17px;height:22px"></div>
<div class="a inp" style="left:408px;top:569px;width:310px;height:26px"></div>
<div class="a btn" style="left:718px;top:571px;width:75px;height:23px;line-height:22.5px">Add</div>

<!-- divider -->
<div class="a" style="left:805px;top:321px;width:1px;height:279px;background:#0a0a0a"></div>

<!-- OVERALL -->
<div class="a" style="left:861px;top:355px;font-size:15px;font-weight:bold;line-height:18px;letter-spacing:-0.12px">Overall Amount Details</div>
<div class="a" style="left:860px;top:380px;width:200px;height:1px;background:#3f6079"></div>
<div class="a lbl r" style="left:861px;top:397px">Amount</div>
<div class="a inp" style="left:1063px;top:390px;width:184px;height:26px;text-align:right"><span class="v" style="top:2px;color:#a0a8a6">112,500.00</span></div>
<div class="a lbl r" style="left:861px;top:431px">DisCount</div>
<div class="a inp" style="left:1063px;top:424px;width:184px;height:26px"><span class="v" style="top:2px">500</span></div>
<div class="a lbl r" style="left:861px;top:465px">Amount After DisCount</div>
<div class="a inp" style="left:1063px;top:458px;width:184px;height:26px"><span class="v" style="top:2px">112000</span></div>
<div class="a lbl r" style="left:861px;top:499px">Tax</div>
<div class="a inp" style="left:1063px;top:492px;width:184px;height:26px"><span class="v" style="top:2px;color:#a0a8a6">5,600.00</span></div>
<div class="a lbl r" style="left:861px;top:533px">Total Amount</div>
<div class="a inp" style="left:1063px;top:526px;width:184px;height:26px"><span class="v" style="top:2px;color:#a0a8a6">117,600.00</span></div>

<!-- bottom lines -->
<div class="a" style="left:0;top:604px;width:1349px;height:2px;background:#8c8c8c"></div>
<div class="a" style="left:0;top:601px;width:1345px;height:1px;background:#d3dcd9"></div>

</body>
</html>
